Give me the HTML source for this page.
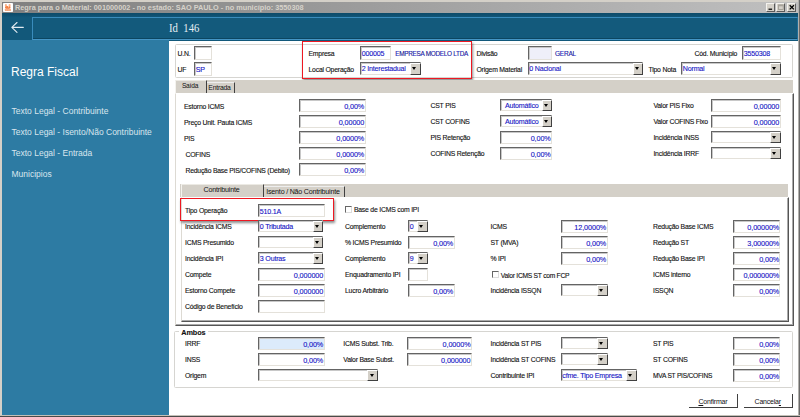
<!DOCTYPE html><html><head><meta charset="utf-8"><title>Regra Fiscal</title><style>
*{box-sizing:border-box;margin:0;padding:0}
html,body{width:800px;height:417px;overflow:hidden;background:#fff}
body{font-family:"Liberation Sans",sans-serif;position:relative}
#w{position:absolute;left:0;top:0;width:800px;height:417px;background:#d4d0c8;overflow:hidden}
#tb{position:absolute;left:2px;top:2px;width:796px;height:11.3px;background:linear-gradient(90deg,#808080 0%,#848484 8%,#c0c0c0 100%)}
#tt{position:absolute;left:12.6px;top:1.1px;font-size:7.25px;font-weight:bold;color:#d6d2ca;white-space:nowrap;line-height:9px;transform:scaleX(1.008);transform-origin:0 0}
#ic{position:absolute;left:1.3px;top:0.9px;width:9.6px;height:9px;background:#fff;border-radius:0.8px;overflow:hidden}
.wb{position:absolute;top:1px;height:8.6px;width:9.1px;background:#d4d0c8;border-top:1px solid #f4f2ee;border-left:1px solid #f4f2ee;border-right:1px solid #5a5a5a;border-bottom:1px solid #5a5a5a}
#hd{position:absolute;left:2px;top:13.2px;width:796px;height:27.9px;background:linear-gradient(180deg,#0d4b69 0,#0f5172 2.5px,#12587a 4.5px,#12587a 100%)}
#hb{position:absolute;left:29.8px;top:3.6px;width:766px;height:23.3px;border:1.2px solid #3a8cbc;border-right:1px solid #1f6d96;background:#135a7c;border-bottom:1.4px solid #4596c6}
#hb i{position:absolute;left:0;right:0;bottom:0;height:1.2px;background:#0c4661}
#ht{position:absolute;left:166.7px;top:6.9px;font-family:"Liberation Serif",serif;font-size:13.4px;color:#e6eef3;white-space:pre;line-height:15px;transform:scaleX(0.8);transform-origin:0 0}
#sb{position:absolute;left:2px;top:40.3px;width:167px;height:374.5px;background:#2d7ba3}
#sb .h{position:absolute;left:9px;top:24.4px;font-size:12px;color:#fff;white-space:nowrap;line-height:15px}
#sb .m{position:absolute;left:9.5px;font-size:8.5px;color:#d9e6ee;white-space:nowrap;line-height:11px}
#mn{position:absolute;left:169px;top:41.1px;width:629.2px;height:373.7px;background:#fff}
.l{position:absolute;font-size:6.85px;letter-spacing:-0.21px;line-height:10px;height:10px;color:#111;-webkit-text-stroke:0.12px #111;white-space:nowrap}
.i{position:absolute;border-top:1px solid #646464;border-left:1px solid #646464;border-right:1px solid #e4e1da;border-bottom:1px solid #e4e1da;background:#fff;font-size:7.1px;letter-spacing:-0.2px;color:#1212c4;-webkit-text-stroke:0.1px #1212c4;white-space:nowrap;box-shadow:inset 1px 1px 0 #c8c8c8}
.i span{position:absolute;left:0.8px;right:0.3px;top:50%;margin-top:-3.5px;line-height:10px;height:10px}
.i.r span{font-size:7.25px;letter-spacing:-0.1px}
.c span{right:12.5px;margin-top:-4.2px}
.c b{position:absolute;right:-1px;top:0;bottom:-0.6px;width:10.2px;background:#d4d0c8;border-top:1px solid #fff;border-left:1px solid #fff;border-right:1px solid #404040;border-bottom:1px solid #404040}
.c b:after{content:"";position:absolute;left:50%;top:50%;margin-left:-3px;margin-top:-1.5px;border-left:2.9px solid transparent;border-right:2.9px solid transparent;border-top:3.1px solid #000}
.v{color:#1818c8}
.k{position:absolute;width:7px;height:7px;background:#fff;border-top:1px solid #666;border-left:1px solid #666;border-right:1px solid #ddd;border-bottom:1px solid #ddd}
.gb{position:absolute;border:1px solid #d6d5d1;border-radius:1.5px}
.ts{position:absolute;background:#d4d0c8}
.pg{position:absolute;background:#fff;border-left:1.8px solid #dddad3;border-top:1px solid #fff;border-right:1.5px solid #555;border-bottom:1.5px solid #555;box-shadow:inset -1px -1px 0 #aaa}
.tab{position:absolute;font-size:7px;letter-spacing:-0.2px;color:#111;text-align:center;line-height:10px;white-space:nowrap}
.rb{position:absolute;border:1.5px solid #ee1822;box-shadow:1.2px 1.6px 2.4px rgba(0,0,0,.45)}
.btn{position:absolute;background:#fff;border-right:1.3px solid #404040;border-bottom:1.3px solid #404040;font-size:7px;letter-spacing:-0.2px;color:#111;text-align:center;line-height:16.4px}
</style></head><body><div id="w">
<div id="tb"><div id="ic"><svg width="9.6" height="9" viewBox="0 0 96 90" style="position:absolute;left:0;top:0"><circle cx="29" cy="22" r="11" fill="#f9b38a"/><circle cx="66" cy="22" r="11" fill="#f9b38a"/><path d="M24 33 L44 30 L52 38 L72 31 L76 52 L60 58 L36 58 L20 52Z" fill="#f3702a"/><path d="M34 40 L44 48 M62 38 L54 50" stroke="#fde3d2" stroke-width="5" fill="none"/><rect x="19" y="62" width="60" height="16" rx="2" fill="#f58d55"/><path d="M30 70 H40 M52 70 H68" stroke="#fbd0b6" stroke-width="4"/></svg></div><div id="tt">Regra para o Material: 001000002 - no estado: SAO PAULO - no município: 3550308</div>
<div class="wb" style="left:764px"><svg width="8" height="7" style="position:absolute;left:0;top:0"><rect x="1.5" y="4.6" width="3.6" height="1.2" fill="#000"/></svg></div>
<div class="wb" style="left:774px"><svg width="8" height="7" style="position:absolute;left:0;top:0"><rect x="1.4" y="0.9" width="4.8" height="4.6" fill="none" stroke="#9c988f" stroke-width="0.8"/><rect x="1.4" y="0.9" width="4.8" height="1.4" fill="#a8a49c"/></svg></div>
<div class="wb" style="left:785px"><svg width="8" height="7" style="position:absolute;left:0;top:0"><path d="M1.7 1.2 L5.9 5.4 M5.9 1.2 L1.7 5.4" stroke="#000" stroke-width="1.3"/></svg></div>
</div>
<div style="position:absolute;left:2px;top:12.7px;width:796.3px;height:1.2px;background:#9dbccd"></div>
<div id="hd"><svg style="position:absolute;left:8px;top:6.6px" width="16" height="15" viewBox="0 0 16 15"><path d="M13.3 7.4 H2 M7.0 2.5 L1.8 7.4 L7.0 12.3" fill="none" stroke="#e2ebf1" stroke-width="1.1" stroke-linecap="round" stroke-linejoin="round"/></svg><div id="hb"><i></i></div><div id="ht">Id  146</div></div>
<div id="sb"><div class="h">Regra Fiscal</div>
<div class="m" style="top:65.5px">Texto Legal - Contribuinte</div>
<div class="m" style="top:86.5px">Texto Legal - Isento/Não Contribuinte</div>
<div class="m" style="top:107.5px">Texto Legal - Entrada</div>
<div class="m" style="top:128.5px">Municipios</div>
</div>
<div id="mn" style="">
</div>
<div class="gb" style="left:174.5px;top:44px;width:618.5px;height:34.2px"></div>
<div class="l" style="left:177.5px;top:48.8px;">U.N.</div>
<div class="i r" style="left:194px;top:46px;width:17.5px;height:13.5px;background:#fff;text-align:right;"><span></span></div>
<div class="l" style="left:177.5px;top:65.2px;">UF</div>
<div class="i" style="left:194px;top:62px;width:17.5px;height:13.5px;background:#fff;text-align:left;"><span>SP</span></div>
<div class="rb" style="left:301.9px;top:40.9px;width:169.9px;height:37.9px"></div>
<div class="l" style="left:308.5px;top:49.1px;">Empresa</div>
<div class="i" style="left:360px;top:46px;width:30.5px;height:13.5px;background:#fff;text-align:left;"><span>000005</span></div>
<div class="l" style="left:395.2px;top:49.1px;color:#1818c8;font-size:6.4px;letter-spacing:-0.27px">EMPRESA MODELO LTDA</div>
<div class="l" style="left:308.5px;top:64.7px;">Local Operação</div>
<div class="i c" style="left:360px;top:62px;width:60.5px;height:13px;text-align:left;"><span>2 Interestadual</span><b></b></div>
<div class="l" style="left:476.5px;top:49.1px;">Divisão</div>
<div class="i" style="left:527.5px;top:46px;width:24.5px;height:13.5px;background:#efeff9;text-align:left;"><span></span></div>
<div class="l" style="left:555px;top:49.1px;color:#1818c8;font-size:6.5px">GERAL</div>
<div class="l" style="left:476.5px;top:64.7px;">Origem Material</div>
<div class="i c" style="left:527.5px;top:62px;width:115.5px;height:13px;text-align:left;"><span>0 Nacional</span><b></b></div>
<div class="l" style="left:648.5px;top:64.7px;">Tipo Nota</div>
<div class="i c" style="left:681px;top:62px;width:99.5px;height:13px;text-align:left;"><span>Normal</span><b></b></div>
<div class="l" style="left:694.5px;top:49.1px;">Cód. Município</div>
<div class="i" style="left:742px;top:46px;width:38.5px;height:13.5px;background:#fff;text-align:left;"><span>3550308</span></div>
<div class="ts" style="left:175px;top:80.3px;width:618px;height:13px"></div>
<div class="tab" style="left:175px;top:80.3px;width:32px;height:13px;border-left:1px solid #f4f3ef;border-top:0.6px solid #eceae4;border-right:1.2px solid #404040;line-height:10.8px;font-size:6.6px;padding-right:2px">Saída</div>
<div class="tab" style="left:207px;top:81.8px;width:28px;height:11.2px;border-top:1px solid #eee;border-right:1.2px solid #404040;line-height:9.4px;font-size:6.8px;padding-right:2px">Entrada</div>
<div class="pg" style="left:175px;top:93px;width:618.5px;height:232.5px"></div>
<div class="l" style="left:184px;top:102.45px;">Estorno ICMS</div>
<div class="i r" style="left:299px;top:99px;width:66.5px;height:12.5px;background:#fff;text-align:right;"><span>0,00%</span></div>
<div class="l" style="left:184px;top:118.45px;">Preço Unit. Pauta ICMS</div>
<div class="i r" style="left:299px;top:115px;width:66.5px;height:12.5px;background:#fff;text-align:right;"><span>0,00000</span></div>
<div class="l" style="left:184px;top:134.45px;">PIS</div>
<div class="i r" style="left:299px;top:131px;width:66.5px;height:12.5px;background:#fff;text-align:right;"><span>0,0000%</span></div>
<div class="l" style="left:185.5px;top:150.45px;">COFINS</div>
<div class="i r" style="left:299px;top:147px;width:66.5px;height:12.5px;background:#fff;text-align:right;"><span>0,0000%</span></div>
<div class="l" style="left:185.5px;top:166.45px;"><span style="font-size:6.8px">Redução Base PIS/COFINS (Débito)</span></div>
<div class="i r" style="left:299px;top:163px;width:66.5px;height:12.5px;background:#fff;text-align:right;"><span>0,00%</span></div>
<div class="l" style="left:430.5px;top:101.2px;">CST PIS</div>
<div class="i c" style="left:499.5px;top:99px;width:52.5px;height:12px;text-align:right;"><span>Automático</span><b></b></div>
<div class="l" style="left:430.5px;top:117.2px;">CST COFINS</div>
<div class="i c" style="left:499.5px;top:115px;width:52.5px;height:12px;text-align:right;"><span>Automático</span><b></b></div>
<div class="l" style="left:430.5px;top:133.2px;">PIS Retenção</div>
<div class="i r" style="left:499.5px;top:131px;width:52.5px;height:12.5px;background:#fff;text-align:right;"><span>0,00%</span></div>
<div class="l" style="left:430.5px;top:149.2px;">COFINS Retenção</div>
<div class="i r" style="left:499.5px;top:147px;width:52.5px;height:12.5px;background:#fff;text-align:right;"><span>0,00%</span></div>
<div class="l" style="left:653.4px;top:101.2px;">Valor PIS Fixo</div>
<div class="i r" style="left:710.5px;top:99px;width:70.0px;height:12.5px;background:#fff;text-align:right;"><span>0,00000</span></div>
<div class="l" style="left:653.4px;top:117.2px;">Valor COFINS Fixo</div>
<div class="i r" style="left:710.5px;top:115px;width:70.0px;height:12.5px;background:#fff;text-align:right;"><span>0,00000</span></div>
<div class="l" style="left:653.4px;top:133.2px;">Incidência INSS</div>
<div class="i c" style="left:710.5px;top:131px;width:70.0px;height:12px;text-align:left;"><span></span><b></b></div>
<div class="l" style="left:653.4px;top:149.2px;">Incidência IRRF</div>
<div class="i c" style="left:710.5px;top:147px;width:70.0px;height:12px;text-align:left;"><span></span><b></b></div>
<div class="ts" style="left:180.3px;top:184.3px;width:608.2px;height:12.7px"></div>
<div class="tab" style="left:181px;top:184.3px;width:83px;height:12.7px;border-left:1px solid #f4f3ef;border-top:0.6px solid #eceae4;border-right:1.2px solid #404040;line-height:11.4px;font-size:7.1px;padding-right:2px">Contribuinte</div>
<div class="tab" style="left:264px;top:186px;width:80.5px;height:11px;border-top:1px solid #eee;border-right:1.2px solid #404040;line-height:10.5px;font-size:7.1px;padding-right:1.5px">Isento / Não Contribuinte</div>
<div class="pg" style="left:180.5px;top:197px;width:608.5px;height:124.5px"></div>
<div class="rb" style="left:179.8px;top:198.4px;width:154px;height:22.6px"></div>
<div class="l" style="left:185px;top:205.95px;">Tipo Operação</div>
<div class="i" style="left:258px;top:204px;width:66.5px;height:12.5px;background:#fff;text-align:left;"><span>510.1A</span></div>
<div class="l" style="left:185px;top:221.95px;">Incidência ICMS</div>
<div class="i c" style="left:258px;top:220px;width:65px;height:12px;text-align:left;"><span>0 Tributada</span><b></b></div>
<div class="l" style="left:185px;top:237.95px;">ICMS Presumido</div>
<div class="i c" style="left:258px;top:236px;width:65px;height:12px;text-align:left;"><span></span><b></b></div>
<div class="l" style="left:185px;top:253.95px;">Incidência IPI</div>
<div class="i c" style="left:258px;top:252px;width:65px;height:12px;text-align:left;"><span>3 Outras</span><b></b></div>
<div class="l" style="left:185px;top:269.95px;">Compete</div>
<div class="i r" style="left:258px;top:268px;width:66.5px;height:12.5px;background:#fff;text-align:right;"><span>0,000000</span></div>
<div class="l" style="left:185px;top:285.95px;">Estorno Compete</div>
<div class="i r" style="left:258px;top:284px;width:66.5px;height:12.5px;background:#fff;text-align:right;"><span>0,000000</span></div>
<div class="l" style="left:185px;top:301.95px;">Código de Benefício</div>
<div class="i r" style="left:258px;top:300px;width:66.5px;height:12.5px;background:#fff;text-align:right;"><span></span></div>
<div class="k" style="left:344.9px;top:206.2px"></div>
<div class="l" style="left:353.9px;top:205.1px;">Base de ICMS com IPI</div>
<div class="l" style="left:345px;top:221.95px;">Complemento</div>
<div class="i c" style="left:408px;top:220px;width:19.5px;height:12px;text-align:left;"><span>0</span><b></b></div>
<div class="l" style="left:345px;top:237.95px;">% ICMS Presumido</div>
<div class="i r" style="left:408px;top:236px;width:46.5px;height:12.5px;background:#fff;text-align:right;"><span>0,00%</span></div>
<div class="l" style="left:345px;top:253.95px;">Complemento</div>
<div class="i c" style="left:408px;top:252px;width:19.5px;height:12px;text-align:left;"><span>9</span><b></b></div>
<div class="l" style="left:345px;top:269.95px;">Enquadramento IPI</div>
<div class="i r" style="left:408px;top:268px;width:19.5px;height:12.5px;background:#fff;text-align:right;"><span></span></div>
<div class="l" style="left:345px;top:285.95px;">Lucro Arbitrário</div>
<div class="i r" style="left:408px;top:284px;width:46.5px;height:12.5px;background:#fff;text-align:right;"><span>0,00%</span></div>
<div class="l" style="left:490.5px;top:221.95px;">ICMS</div>
<div class="i r" style="left:560.5px;top:220px;width:47.0px;height:12.5px;background:#fff;text-align:right;"><span>12,0000%</span></div>
<div class="l" style="left:490.5px;top:237.95px;">ST (MVA)</div>
<div class="i r" style="left:560.5px;top:236px;width:47.0px;height:12.5px;background:#fff;text-align:right;"><span>0,00%</span></div>
<div class="l" style="left:490.5px;top:253.95px;">% IPI</div>
<div class="i r" style="left:560.5px;top:252px;width:47.0px;height:12.5px;background:#fff;text-align:right;"><span>0,00%</span></div>
<div class="k" style="left:491.8px;top:270.8px"></div>
<div class="l" style="left:500.8px;top:270.6px;font-size:6.7px;letter-spacing:-0.25px">Valor ICMS ST com FCP</div>
<div class="l" style="left:490.5px;top:285.95px;">Incidência ISSQN</div>
<div class="i c" style="left:560.5px;top:284px;width:47.0px;height:12px;text-align:left;"><span></span><b></b></div>
<div class="l" style="left:653px;top:221.95px;">Redução Base ICMS</div>
<div class="i r" style="left:733.2px;top:220px;width:47.299999999999955px;height:12.5px;background:#fff;text-align:right;"><span>0,00000%</span></div>
<div class="l" style="left:653px;top:237.95px;">Redução ST</div>
<div class="i r" style="left:733.2px;top:236px;width:47.299999999999955px;height:12.5px;background:#fff;text-align:right;"><span>3,00000%</span></div>
<div class="l" style="left:653px;top:253.95px;">Redução Base IPI</div>
<div class="i r" style="left:733.2px;top:252px;width:47.299999999999955px;height:12.5px;background:#fff;text-align:right;"><span>0,00%</span></div>
<div class="l" style="left:653px;top:269.95px;">ICMS interno</div>
<div class="i r" style="left:733.2px;top:268px;width:47.299999999999955px;height:12.5px;background:#fff;text-align:right;"><span>0,000000%</span></div>
<div class="l" style="left:653px;top:285.95px;">ISSQN</div>
<div class="i r" style="left:733.2px;top:284px;width:47.299999999999955px;height:12.5px;background:#fff;text-align:right;"><span>0,00%</span></div>
<div class="gb" style="left:174.1px;top:331px;width:619px;height:56.6px"></div>
<div class="l" style="left:179.3px;top:327.7px;font-weight:bold;background:#fff;padding:0 2px;font-size:7.3px;letter-spacing:-0.1px">Ambos</div>
<div class="l" style="left:185px;top:339.15px;">IRRF</div>
<div class="i r" style="left:258px;top:337.2px;width:66.5px;height:12.5px;background:#dcebfb;text-align:right;"><span>0,00%</span></div>
<div class="l" style="left:185px;top:355.25px;">INSS</div>
<div class="i r" style="left:258px;top:353.3px;width:66.5px;height:12.5px;background:#fff;text-align:right;"><span>0,00%</span></div>
<div class="l" style="left:185px;top:371.25px;">Origem</div>
<div class="i c" style="left:258px;top:369.3px;width:119.60000000000002px;height:12.0px;text-align:left;"><span></span><b></b></div>
<div class="l" style="left:343.3px;top:339.15px;">ICMS Subst. Trib.</div>
<div class="i r" style="left:407.2px;top:337.2px;width:64.60000000000002px;height:12.5px;background:#fff;text-align:right;"><span>0,0000%</span></div>
<div class="l" style="left:343.3px;top:355.25px;">Valor Base Subst.</div>
<div class="i r" style="left:407.2px;top:353.3px;width:64.60000000000002px;height:12.5px;background:#fff;text-align:right;"><span>0,000000</span></div>
<div class="l" style="left:490.5px;top:339.15px;">Incidência ST PIS</div>
<div class="i c" style="left:560.5px;top:337.2px;width:47.0px;height:12.0px;text-align:left;"><span></span><b></b></div>
<div class="l" style="left:490.5px;top:355.25px;">Incidência ST COFINS</div>
<div class="i c" style="left:560.5px;top:353.3px;width:47.0px;height:12.0px;text-align:left;"><span></span><b></b></div>
<div class="l" style="left:490.5px;top:371.25px;">Contribuinte IPI</div>
<div class="i c" style="left:560.5px;top:369.3px;width:76.0px;height:12.0px;text-align:left;"><span>cfme. Tipo Empresa</span><b></b></div>
<div class="l" style="left:653px;top:339.15px;">ST PIS</div>
<div class="i r" style="left:733.2px;top:337.2px;width:47.299999999999955px;height:12.5px;background:#fff;text-align:right;"><span>0,00%</span></div>
<div class="l" style="left:653px;top:355.25px;">ST COFINS</div>
<div class="i r" style="left:733.2px;top:353.3px;width:47.299999999999955px;height:12.5px;background:#fff;text-align:right;"><span>0,00%</span></div>
<div class="l" style="left:653px;top:371.25px;font-size:6.6px">MVA ST PIS/COFINS</div>
<div class="i r" style="left:733.2px;top:369.3px;width:47.299999999999955px;height:12.5px;background:#fff;text-align:right;"><span>0,00%</span></div>
<div class="btn" style="left:689px;top:393.7px;width:48.8px;height:14.5px"><u>C</u>onfirmar</div>
<div class="btn" style="left:743.5px;top:393.7px;width:49.5px;height:14.5px">Cancela<u>r</u></div>
<div style="position:absolute;left:0;top:0;width:2px;height:417px;background:#d4d0c8"></div>
<div style="position:absolute;left:798.3px;top:0;width:0.9px;height:417px;background:#b2b0ac"></div>
<div style="position:absolute;left:799.2px;top:0;width:0.8px;height:417px;background:#6a6a6a"></div>
<div style="position:absolute;left:0;top:414.8px;width:800px;height:0.9px;background:#c4c0b8"></div>
<div style="position:absolute;left:0;top:415.7px;width:800px;height:1.3px;background:#4a4a4a"></div>
</div></body></html>
